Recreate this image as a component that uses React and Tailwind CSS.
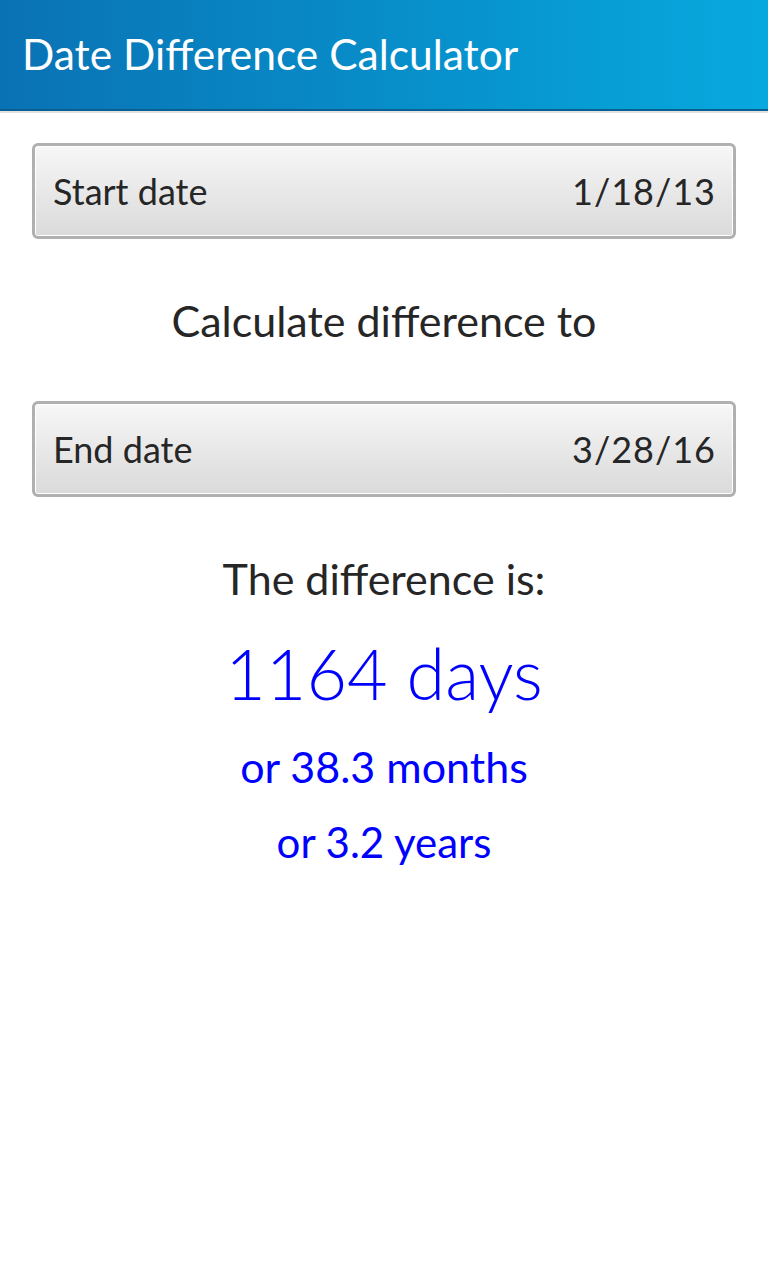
import React from "react";

const DateButton = ({ label, value }) => (
  <button className="flex h-[96px] w-full items-center justify-between rounded-[6px] border-[3px] border-[#b0b0b0] bg-gradient-to-b from-[#f7f7f7] to-[#dadada] pl-[18px] pr-[17px] text-[36px] text-[#262626] shadow-[inset_0_0_0_1px_#ffffff]">
    <span>{label}</span>
    <span className="tracking-[1px]">{value}</span>
  </button>
);

const App = () => {
  return (
    <div className="min-h-[1280px] bg-white font-['Lato',sans-serif]">
      {/* Title bar */}
      <div className="flex h-[111px] items-center border-b-2 border-[#0a5f92] bg-gradient-to-r from-[#0a72b4] to-[#07a9de] px-[22px]">
        <h1 className="text-[42.5px] font-normal leading-none text-white">Date Difference Calculator</h1>
      </div>
      <div className="h-[2px] bg-[#e2e2e2]" />

      <div className="flex flex-col items-center px-[32px] pt-[30px]">
        <DateButton label="Start date" value="1/18/13" />
        <div className="flex h-[162px] items-center text-[43px] leading-none text-[#262626]">Calculate difference to</div>
        <DateButton label="End date" value="3/28/16" />

        <div className="mt-[54px] h-[56px] text-[43px] leading-[56px] text-[#262626]">The difference is:</div>
        <div className="mt-[26px] h-[80px] text-[70px] font-light leading-[80px] text-[#0000ff]">1164 days</div>
        <div className="mt-[26px] h-[56px] text-[43px] leading-[56px] text-[#0000ff]">or 38.3 months</div>
        <div className="mt-[19px] h-[56px] text-[42px] leading-[56px] text-[#0000ff]">or 3.2 years</div>
      </div>
    </div>
  );
};

export default App;
